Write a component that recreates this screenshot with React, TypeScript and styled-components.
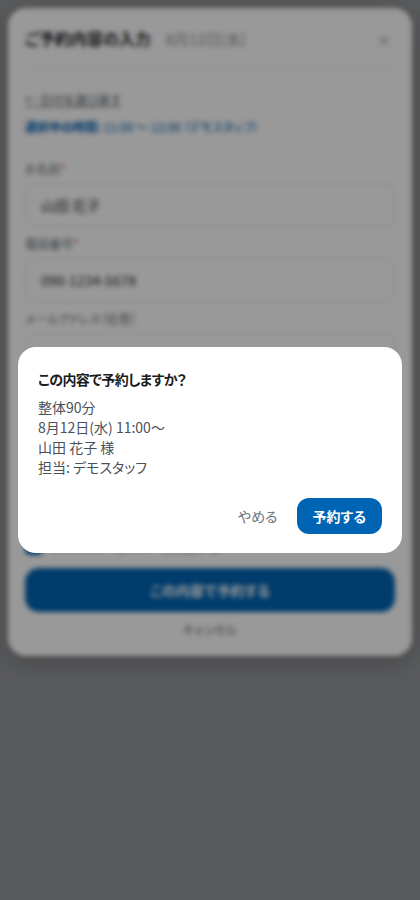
import React from 'react';
import styled, { createGlobalStyle } from 'styled-components';

const GlobalStyle = createGlobalStyle`
  html, body {
    margin: 0;
    padding: 0;
  }
  body {
    font-family: "Noto Sans CJK JP", "Noto Sans", sans-serif;
    font-feature-settings: "palt";
    color: #222;
  }
  * {
    box-sizing: border-box;
  }
`;

const Page = styled.div`
  min-height: 900px;
  background: #95979a;
  padding: 8px;
`;

const Sheet = styled.div`
  background: #fff;
  border-radius: 18px;
  padding: 0 17px 18px;
  box-shadow: 0 6px 24px rgba(0, 0, 0, 0.25);
`;

const SheetHeader = styled.div`
  display: flex;
  align-items: center;
  gap: 15px;
  padding: 18px 0 19px;
  border-bottom: 1px solid #e6e8eb;
`;

const SheetTitle = styled.div`
  font-size: 16px;
  line-height: 24px;
  font-weight: 700;
  color: #1f2328;
`;

const SheetDate = styled.div`
  flex: 1;
  font-size: 15px;
  color: #8a9099;
`;

const CloseBtn = styled.span`
  display: flex;
  width: 16px;
  height: 16px;
  margin: 5px 3px 0 0;
  color: #a3a8ae;
`;

const BackLink = styled.div`
  margin-top: 21px;
  font-size: 12px;
  line-height: 18px;
  color: #5c636b;
  text-decoration: underline;
`;

const SlotInfo = styled.div`
  margin-top: 9px;
  padding-bottom: 14px;
  border-bottom: 1px solid #e6e8eb;
  font-size: 12px;
  line-height: 18px;
  color: #0064b4;

  b {
    font-weight: 700;
  }
`;

const Field = styled.div<{ $first?: boolean }>`
  display: flex;
  flex-direction: column;
  gap: 6px;
  margin-top: ${(p) => (p.$first ? '10px' : '9px')};
`;

const Label = styled.label`
  font-size: 12px;
  line-height: 16px;
  color: #6b7179;

  em {
    font-style: normal;
    color: #e5484d;
  }
`;

const Input = styled.div<{ $tall?: boolean }>`
  height: ${(p) => (p.$tall ? '108px' : '44px')};
  display: flex;
  align-items: ${(p) => (p.$tall ? 'flex-start' : 'center')};
  padding: 0 15px;
  border: 1px solid #e2e5e9;
  border-radius: 10px;
  font-size: 14px;
  color: #2a2f35;
`;

const AgreeRow = styled.div`
  display: flex;
  align-items: center;
  gap: 8px;
  margin-top: 21px;
  font-size: 12px;
  color: #5c636b;
`;

const Check = styled.span`
  width: 18px;
  height: 18px;
  border-radius: 5px;
  background: #0064b4;
`;

const SubmitBtn = styled.div`
  margin-top: 13px;
  height: 44px;
  display: flex;
  align-items: center;
  justify-content: center;
  border-radius: 14px;
  background: #0064b4;
  color: #fff;
  font-size: 14px;
  font-weight: 700;
`;

const CancelLink = styled.div`
  margin-top: 10px;
  text-align: center;
  font-size: 12px;
  line-height: 16px;
  color: #6b7179;
`;

const Overlay = styled.div`
  position: fixed;
  inset: 0;
  display: flex;
  align-items: center;
  justify-content: center;
  padding: 0 18px;
  background: rgba(0, 0, 0, 0.4);
  backdrop-filter: blur(2.5px);
`;

const Dialog = styled.div`
  width: 100%;
  background: #fff;
  border-radius: 18px;
  padding: 22px 20px 19px;
`;

const DialogTitle = styled.div`
  font-size: 14px;
  line-height: 20px;
  font-weight: 700;
  letter-spacing: -0.6px;
  color: #1a1d21;
`;

const DialogBody = styled.div`
  margin-top: 8px;
  font-size: 14px;
  line-height: 20px;
  color: #4a5058;
`;

const Actions = styled.div`
  display: flex;
  justify-content: flex-end;
  gap: 9px;
  margin-top: 21px;
`;

const Btn = styled.button<{ $primary?: boolean }>`
  height: 36px;
  padding: 0 ${(p) => (p.$primary ? '16px' : '10px')};
  border: none;
  border-radius: 12px;
  font-family: inherit;
  font-feature-settings: "palt";
  font-size: 14px;
  font-weight: ${(p) => (p.$primary ? 700 : 400)};
  background: ${(p) => (p.$primary ? '#0064b4' : 'transparent')};
  color: ${(p) => (p.$primary ? '#fff' : '#6b7280')};
`;

function App() {
  return (
    <>
      <GlobalStyle />
      <Page>
        <Sheet>
          <SheetHeader>
            <SheetTitle>ご予約内容の入力</SheetTitle>
            <SheetDate>8月12日(水)</SheetDate>
            <CloseBtn>
              <svg viewBox='0 0 16 16' width='16' height='16' fill='none' stroke='currentColor' strokeWidth='1.5' strokeLinecap='round'>
                <path d='M4 4l8 8M12 4l-8 8' />
              </svg>
            </CloseBtn>
          </SheetHeader>
          <BackLink>← 日付を選び直す</BackLink>
          <SlotInfo>
            <b>選択中の時間:</b> 11:00 〜 12:00 （デモスタッフ）
          </SlotInfo>
          <Field $first>
            <Label>
              お名前<em>*</em>
            </Label>
            <Input>山田 花子</Input>
          </Field>
          <Field>
            <Label>
              電話番号<em>*</em>
            </Label>
            <Input>090-1234-5678</Input>
          </Field>
          <Field>
            <Label>メールアドレス（任意）</Label>
            <Input />
          </Field>
          <Field>
            <Label>ご要望・備考（任意）</Label>
            <Input $tall />
          </Field>
          <AgreeRow>
            <Check />
            プライバシーポリシーに同意する
          </AgreeRow>
          <SubmitBtn>この内容で予約する</SubmitBtn>
          <CancelLink>キャンセル</CancelLink>
        </Sheet>
      </Page>
      <Overlay>
        <Dialog>
          <DialogTitle>この内容で予約しますか？</DialogTitle>
          <DialogBody>
            整体90分
            <br />
            8月12日(水) 11:00〜
            <br />
            山田 花子 様
            <br />
            担当: デモスタッフ
          </DialogBody>
          <Actions>
            <Btn>やめる</Btn>
            <Btn $primary>予約する</Btn>
          </Actions>
        </Dialog>
      </Overlay>
    </>
  );
}

export default App;
